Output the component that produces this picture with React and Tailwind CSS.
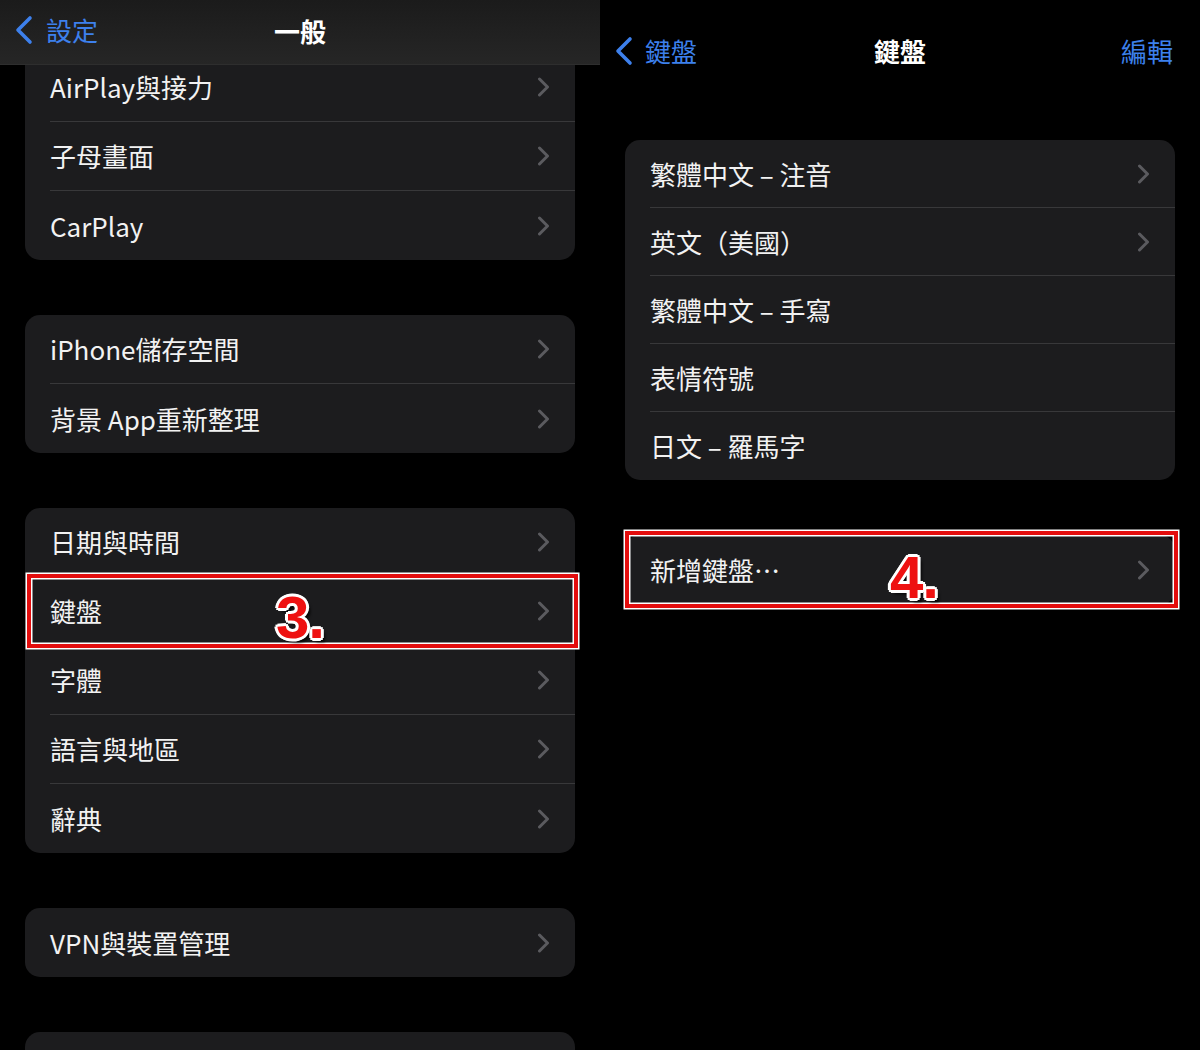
import React from 'react';

const font = { fontFamily: '"Noto Sans CJK TC", "Noto Sans", sans-serif' };

const Chevron = () => (
    <svg width="13" height="20" viewBox="0 0 13 20" className="shrink-0">
        <path d="M2.5 2 L10.5 10 L2.5 18" fill="none" stroke="#5b5b5f" strokeWidth="3" strokeLinecap="round" strokeLinejoin="round" />
    </svg>
);

const BackChevron = () => (
    <svg width="20" height="30" viewBox="0 0 20 30" className="shrink-0">
        <path d="M16 3 L4 15 L16 27" fill="none" stroke="#3d80ec" strokeWidth="3.6" strokeLinecap="round" strokeLinejoin="round" />
    </svg>
);

const Row = ({ label, h = 'h-[69px]', chevron = true, last = false, children }) => (
    <div className={`relative flex items-center pl-[25px] ${h}`}>
        <div className={`flex h-full flex-1 items-center pr-[25px] ${last ? '' : 'border-b border-[#38383a]'}`}>
            <span className="flex-1 text-[26px] text-[#f2f2f2] leading-none">{label}</span>
            {chevron && <Chevron />}
        </div>
        {children}
    </div>
);

const Card = ({ items, rounded = 'rounded-[15px]', h, chevrons, className = '' }) => (
    <div className={`shrink-0 bg-[#1c1c1e] ${rounded} ${className}`}>
        {items.map((it, i) => (
            <Row
                key={i}
                label={typeof it === 'string' ? it : it.label}
                h={h}
                chevron={chevrons ? chevrons[i] : true}
                last={i === items.length - 1}
            >
                {typeof it === 'string' ? null : it.extra}
            </Row>
        ))}
    </div>
);

// red highlight frame with step number
const Highlight = ({ num, numLeft, numTop, frame }) => (
    <>
        <div className={`pointer-events-none absolute border-[4px] border-[#e30d0d] shadow-[0_0_0_1.5px_white,inset_0_0_0_1.5px_white] ${frame}`} />
        <span
            className={`absolute font-bold text-[60px] leading-none tracking-[-1px] text-[#ee1111] [text-shadow:-2px_-2px_0_#fff,2px_-2px_0_#fff,-2px_2px_0_#fff,2px_2px_0_#fff,0_-3px_0_#fff,0_3px_0_#fff,-3px_0_0_#fff,3px_0_0_#fff,4px_4px_3px_rgba(0,0,0,0.85)] ${numLeft} ${numTop}`}
            style={{ fontFamily: '"Liberation Sans", Arial, sans-serif' }}
        >
            {num}
        </span>
    </>
);

export default function App() {
    return (
        <div className="flex h-[1050px] w-[1200px] overflow-hidden bg-black" style={font}>
            {/* left: 一般 */}
            <div className="flex w-[600px] flex-col">
                <div className="relative z-10 flex h-[65px] shrink-0 items-center border-b border-[#2e2e2e] bg-gradient-to-b from-[#1b1b1b] to-[#262626] px-[14px] pb-[4px]">
                    <div className="flex items-center gap-[12px]">
                        <BackChevron />
                        <span className="text-[26px] text-[#3d80ec] leading-none">設定</span>
                    </div>
                    <span className="absolute left-1/2 top-[18px] -translate-x-1/2 text-[26px] font-bold text-white leading-none">一般</span>
                </div>
                <div className="flex flex-col gap-[55px] px-[25px]">
                    <div className="-mt-[12px] shrink-0">
                        <Card rounded="rounded-b-[15px]" items={['AirPlay與接力', '子母畫面', 'CarPlay']} />
                    </div>
                    <Card items={['iPhone儲存空間', '背景 App重新整理']} />
                    <Card
                        items={[
                            '日期與時間',
                            {
                                label: '鍵盤',
                                extra: (
                                    <Highlight
                                        num="3."
                                        numLeft="left-[251px]"
                                        numTop="top-[11px]"
                                        frame="-top-[3px] -bottom-[2px] left-[2px] -right-[3px]"
                                    />
                                ),
                            },
                            '字體',
                            '語言與地區',
                            '辭典',
                        ]}
                    />
                    <Card items={['VPN與裝置管理']} />
                    <Card items={['']} chevrons={[false]} />
                </div>
            </div>

            {/* right: 鍵盤 */}
            <div className="flex w-[600px] flex-col">
                <div className="relative flex h-[105px] shrink-0 items-center px-[14px] pb-[4px]">
                    <div className="flex items-center gap-[11px]">
                        <BackChevron />
                        <span className="text-[26px] text-[#3d80ec] leading-none">鍵盤</span>
                    </div>
                    <span className="absolute left-1/2 top-[38px] -translate-x-1/2 text-[26px] font-bold text-white leading-none">鍵盤</span>
                    <span className="ml-auto pr-[13px] text-[26px] text-[#3d80ec] leading-none">編輯</span>
                </div>
                <div className="flex flex-col gap-[55px] px-[25px] pt-[35px]">
                    <Card
                        h="h-[68px]"
                        chevrons={[true, true, false, false, false]}
                        items={['繁體中文 – 注音', '英文（美國）', '繁體中文 – 手寫', '表情符號', '日文 – 羅馬字']}
                    />
                    <Card
                        h="h-[70px]"
                        items={[
                            {
                                label: '新增鍵盤⋯',
                                extra: (
                                    <Highlight
                                        num="4."
                                        numLeft="left-[265px]"
                                        numTop="top-[13px]"
                                        frame="-top-[4px] -bottom-[3px] left-0 -right-[3px]"
                                    />
                                ),
                            },
                        ]}
                    />
                </div>
            </div>
        </div>
    );
}
